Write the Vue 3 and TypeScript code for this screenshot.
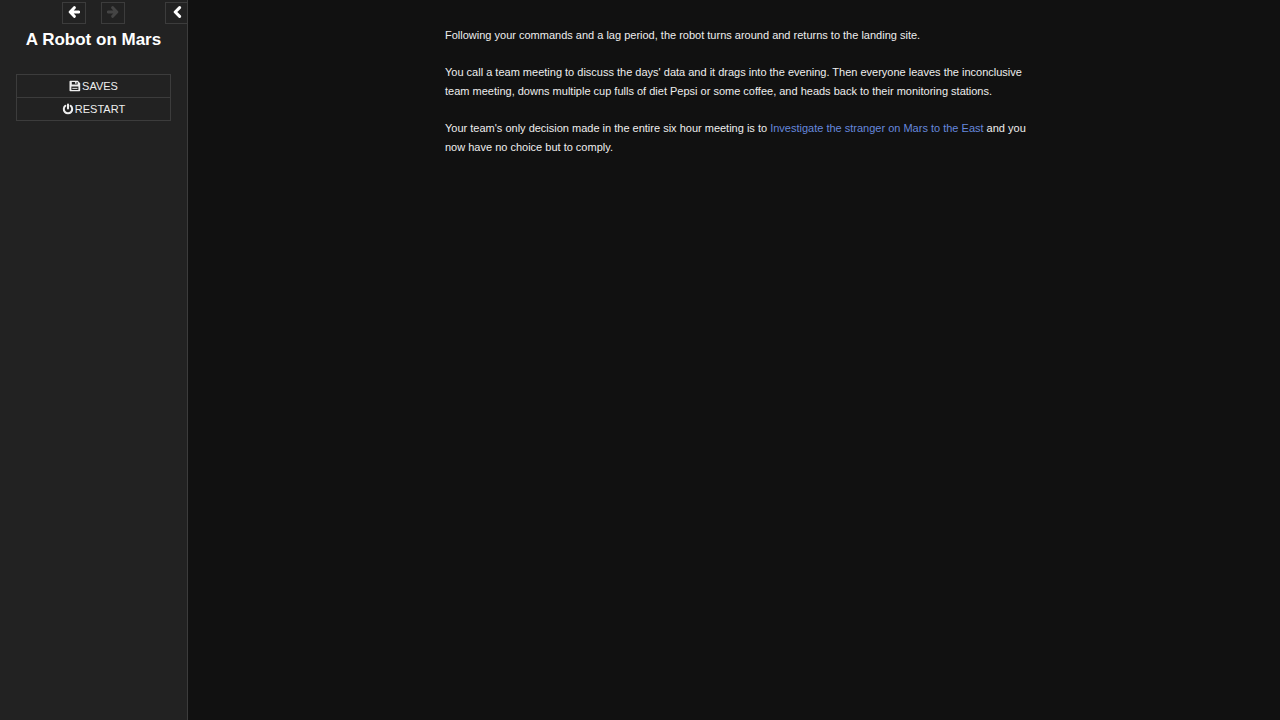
<script setup lang="ts">
import { ref } from 'vue'

const stowed = ref(false)
const title = 'A Robot on Mars'
</script>

<template>
  <div class="story" :class="{ stowed }">
    <aside class="bar">
      <div class="tray">
        <div class="history">
          <button type="button" aria-label="Go backward">
            <svg viewBox="0 0 12 12" width="12" height="12">
              <path d="M6.3 1.7 L2.2 6 L6.3 10.3 M3 6 H10.8" />
            </svg>
          </button>
          <button type="button" aria-label="Go forward" disabled>
            <svg viewBox="0 0 12 12" width="12" height="12">
              <path d="M5.7 1.7 L9.8 6 L5.7 10.3 M9 6 H1.2" />
            </svg>
          </button>
        </div>
        <button class="toggle" type="button" aria-label="Toggle the side bar" @click="stowed = !stowed">
          <svg viewBox="0 0 12 12" width="12" height="12">
            <path d="M8.6 1.6 L4.2 6 L8.6 10.4" />
          </svg>
        </button>
      </div>
      <h1>{{ title }}</h1>
      <nav>
        <ul>
          <li>
            <button type="button">
              <svg class="solid" viewBox="0 0 12 12" width="12" height="12">
                <path
                  fill-rule="evenodd"
                  d="M1.3 0.8 H8.8 L11.2 3.2 V10.4 Q11.2 11.2 10.4 11.2 H1.3 Q0.5 11.2 0.5 10.4 V1.6 Q0.5 0.8 1.3 0.8 Z M2.8 1.9 V4.6 H8.6 V1.9 H7.6 V3.8 H6.1 V1.9 Z M2.4 6.6 V10 H9.4 V6.6 Z"
                />
                <path d="M3.3 7.9 H8.5 V8.8 H3.3 Z" />
              </svg>
              <span>SAVES</span>
            </button>
          </li>
          <li>
            <button type="button">
              <svg viewBox="0 0 12 12" width="12" height="12">
                <path class="ring" d="M3.4 2.8 A4.2 4.2 0 1 0 8.6 2.8 M6 1.4 V5.4" />
              </svg>
              <span>RESTART</span>
            </button>
          </li>
        </ul>
      </nav>
    </aside>
    <main>
      <article>
        <p>Following your commands and a lag period, the robot turns around and returns to the landing site.</p>
        <p>
          You call a team meeting to discuss the days' data and it drags into the evening. Then everyone leaves the
          inconclusive team meeting, downs multiple cup fulls of diet Pepsi or some coffee, and heads back to their
          monitoring stations.
        </p>
        <p>
          Your team's only decision made in the entire six hour meeting is to
          <a href="#investigate">Investigate the stranger on Mars to the East</a> and you now have no choice but to
          comply.
        </p>
      </article>
    </main>
  </div>
</template>

<style>
body {
  margin: 0;
  background: #111;
}
</style>

<style scoped>
.story {
  display: flex;
  min-height: 100vh;
  background: #111;
  color: #eee;
  font-family: "Liberation Sans", Arial, sans-serif;
  font-size: 11px;
  line-height: 19px;
}
.bar {
  box-sizing: border-box;
  flex: none;
  width: 188px;
  background: #222;
  border-right: 1px solid #3c3c3c;
  text-align: center;
  overflow: hidden;
}
.stowed .bar {
  width: 24px;
}
.stowed .history,
.stowed h1,
.stowed nav {
  display: none;
}
.tray {
  display: grid;
  grid-template-columns: 1fr auto;
  padding-top: 2px;
}
.history {
  display: flex;
  gap: 15px;
  padding-left: 62px;
}
button {
  box-sizing: border-box;
  display: flex;
  align-items: center;
  justify-content: center;
  margin: 0;
  padding: 0;
  border: 1px solid #3c3c3c;
  background: transparent;
  color: #eee;
  font: inherit;
  cursor: pointer;
}
.tray button {
  width: 24px;
  height: 22px;
  padding-bottom: 2px;
  color: #fff;
}
.tray button:disabled {
  color: #444;
  cursor: default;
}
.tray .toggle {
  width: 22px;
  border-right: 0;
}
svg {
  display: block;
  fill: none;
  stroke: currentColor;
  stroke-width: 3;
  stroke-linecap: round;
  stroke-linejoin: round;
}
.ring {
  stroke-width: 2;
}
.solid {
  fill: currentColor;
  stroke: none;
}
h1 {
  margin: 4px 0 0;
  font-size: 17px;
  line-height: 24px;
  color: #fff;
}
nav {
  margin: 22px 16px 0;
}
ul {
  margin: 0;
  padding: 0;
  list-style: none;
  border: 1px solid #3c3c3c;
}
li + li {
  border-top: 1px solid #3c3c3c;
}
li button {
  gap: 1px;
  width: 100%;
  height: 22px;
  border: 0;
}
li button:hover {
  background: #333;
}
main {
  flex: 1;
  padding: 26px 24px 26px 38px;
}
article {
  max-width: 592px;
  margin: 0 auto;
}
p {
  margin: 0 0 18px;
}
a {
  color: #68d;
  text-decoration: none;
}
a:hover {
  text-decoration: underline;
}
</style>
